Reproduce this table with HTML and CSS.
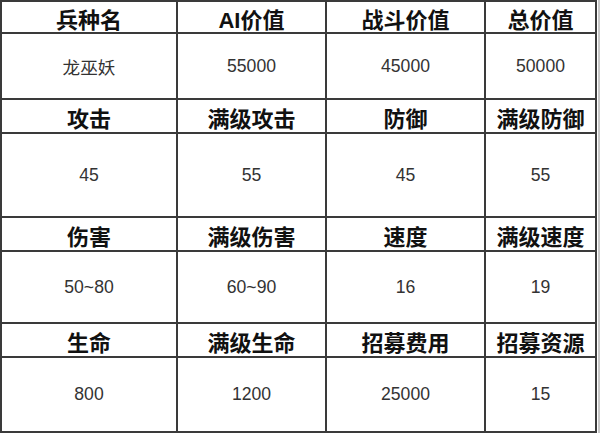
FILE: index.html
```html
<!DOCTYPE html>
<html lang="zh-CN">
<head>
<meta charset="utf-8">
<title>龙巫妖</title>
<link rel="stylesheet" href="styles.css">
</head>
<body>
<div class="frame">
  <div class="grid">
    <div class="cell head">兵种名</div>
    <div class="cell head">AI价值</div>
    <div class="cell head">战斗价值</div>
    <div class="cell head">总价值</div>

    <div class="cell val">龙巫妖</div>
    <div class="cell val">55000</div>
    <div class="cell val">45000</div>
    <div class="cell val">50000</div>

    <div class="cell head">攻击</div>
    <div class="cell head">满级攻击</div>
    <div class="cell head">防御</div>
    <div class="cell head">满级防御</div>

    <div class="cell val">45</div>
    <div class="cell val">55</div>
    <div class="cell val">45</div>
    <div class="cell val">55</div>

    <div class="cell head">伤害</div>
    <div class="cell head">满级伤害</div>
    <div class="cell head">速度</div>
    <div class="cell head">满级速度</div>

    <div class="cell val">50~80</div>
    <div class="cell val">60~90</div>
    <div class="cell val">16</div>
    <div class="cell val">19</div>

    <div class="cell head">生命</div>
    <div class="cell head">满级生命</div>
    <div class="cell head">招募费用</div>
    <div class="cell head">招募资源</div>

    <div class="cell val">800</div>
    <div class="cell val">1200</div>
    <div class="cell val">25000</div>
    <div class="cell val">15</div>
  </div>
</div>
</body>
</html>
```

FILE: styles.css
```css
html, body {
  margin: 0;
  padding: 0;
  background: #ffffff;
}

.frame {
  width: fit-content;
  padding-right: 1px;
  border-right: 2px solid #c9c9c9;
}

.grid {
  display: grid;
  grid-template-columns: 176px 149px 159px 111px;
  grid-template-rows: 32px 66px 34px 84px 34px 72px 34px 75px;
  border-top: 2px solid #3a3a3a;
  border-left: 2px solid #3a3a3a;
  width: 597px;
  box-sizing: border-box;
}

.cell {
  box-sizing: border-box;
  border-right: 2px solid #3a3a3a;
  border-bottom: 2px solid #3a3a3a;
  display: flex;
  align-items: center;
  justify-content: center;
  font-family: "Liberation Sans", "Noto Sans CJK SC", sans-serif;
  white-space: nowrap;
}

.head {
  font-size: 22px;
  font-weight: bold;
  color: #111111;
  padding-top: 1px;
}

.val {
  font-size: 17.6px;
  color: #333333;
}
```
